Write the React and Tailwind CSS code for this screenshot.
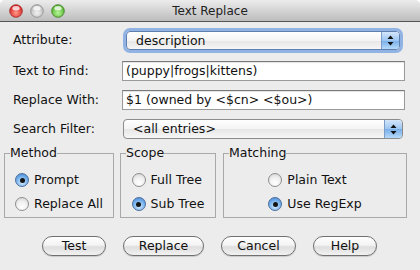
import React from "react";

function TrafficLight({ c1, c2, c3 }) {
  return (
    <svg width="14" height="14" viewBox="0 0 14 14">
      <defs>
        <radialGradient id={"g" + c1.slice(1)} cx="50%" cy="65%" r="60%">
          <stop offset="0%" stopColor={c3} />
          <stop offset="100%" stopColor={c2} />
        </radialGradient>
      </defs>
      <circle cx="7" cy="7" r="6.3" fill={"url(#g" + c1.slice(1) + ")"} stroke={c1} strokeWidth="0.8" />
      <ellipse cx="7" cy="4.2" rx="3.6" ry="2.2" fill="white" opacity="0.75" />
    </svg>
  );
}

function Arrows() {
  return (
    <svg width="7" height="11" viewBox="0 0 7 11">
      <path d="M3.5 0.5 L6.5 4 L0.5 4 Z" fill="#111" />
      <path d="M3.5 10.5 L6.5 7 L0.5 7 Z" fill="#111" />
    </svg>
  );
}

function Popup({ value, focused }) {
  return (
    <div
      className={
        focused
          ? "flex h-[19px] items-stretch rounded-[4px] border border-[#5f7fae] bg-[linear-gradient(#ffffff,#f4f4f4_50%,#e6e6e6_51%,#f6f6f6)] shadow-[0_0_0_3px_rgba(115,160,225,0.75)]"
          : "flex h-[20px] items-stretch rounded-[4px] border border-[#8c8c8c] bg-[linear-gradient(#ffffff,#f4f4f4_50%,#e6e6e6_51%,#f6f6f6)]"
      }
    >
      <div className="flex-1 pl-[9px] leading-[18px]">{value}</div>
      <div className="flex w-[18px] items-center justify-center rounded-r-[3px] border-l border-[#7d9cc8] bg-[linear-gradient(#d4e6fa,#9cc6f2_50%,#78aee8_51%,#b6dafa)]">
        <Arrows />
      </div>
    </div>
  );
}

function Field({ value }) {
  return (
    <div className="h-[20px] border border-[#9a9a9a] border-t-[#7a7a7a] bg-white pl-[3px] leading-[18px] shadow-[inset_0_1px_1px_rgba(0,0,0,0.12)]">
      {value}
    </div>
  );
}

function Radio({ label, checked }) {
  return (
    <div className="flex h-[24px] items-center gap-[5px]">
      <span
        className={
          checked
            ? "flex h-[14px] w-[14px] items-center justify-center rounded-full border border-[#4a6f9e] bg-[radial-gradient(circle_at_50%_70%,#d4ecff,#76b0ec_55%,#3f7fcc)]"
            : "h-[14px] w-[14px] rounded-full border border-[#8e8e8e] bg-[radial-gradient(circle_at_50%_75%,#ffffff,#f0f0f0_50%,#cfcfcf)]"
        }
      >
        {checked && <span className="h-[5px] w-[5px] rounded-full bg-[#141414]" />}
      </span>
      <span>{label}</span>
    </div>
  );
}

function Group({ title, width, children }) {
  return (
    <fieldset className={"border border-[#a9a9a9] " + width}>
      <legend className="ml-[5px] leading-[14px]">{title}</legend>
      <div className="flex justify-center pt-[8px] pb-[1px]">
        <div className="flex flex-col">{children}</div>
      </div>
    </fieldset>
  );
}

function Button({ label, width }) {
  return (
    <button
      className={
        "h-[20px] rounded-full border border-[#707070] bg-[linear-gradient(#ffffff,#f3f3f3_45%,#dedede_55%,#f2f2f2)] leading-[18px] shadow-[0_1px_1px_rgba(0,0,0,0.15)] " +
        width
      }
    >
      {label}
    </button>
  );
}

export default function App() {
  return (
    <div className="h-[270px] w-[420px] overflow-hidden bg-white font-['DejaVu_Sans',sans-serif] text-[12.5px] text-[#111]">
      <div className="h-full rounded-t-[5px] bg-[#ececec]">
        {/* title bar */}
        <div className="relative flex h-[22px] items-center rounded-t-[5px] border-b border-[#555] bg-[linear-gradient(#ececec,#d4d4d4_50%,#bdbdbd)]">
          <div className="flex gap-[7px] pl-[9px]">
            <TrafficLight c1="#9b2a2a" c2="#d81f1f" c3="#ff9a8a" />
            <TrafficLight c1="#8c8c8c" c2="#b9b9b9" c3="#f2f2f2" />
            <TrafficLight c1="#3d7a22" c2="#4fb329" c3="#b8f59a" />
          </div>
          <div className="absolute inset-0 flex items-center justify-center text-[12px] text-[#222]">Text Replace</div>
        </div>

        {/* form rows */}
        <div className="flex flex-col pt-[9px]">
          <div className="flex items-center">
            <div className="w-[126px] pl-[13px]">Attribute:</div>
            <div className="flex-1 pr-[20px]">
              <Popup value="description" focused />
            </div>
          </div>
          <div className="mt-[11px] flex items-center">
            <div className="w-[122px] pl-[13px]">Text to Find:</div>
            <div className="flex-1 pr-[15px]">
              <Field value="(puppy|frogs|kittens)" />
            </div>
          </div>
          <div className="mt-[9px] flex items-center">
            <div className="w-[122px] pl-[13px]">Replace With:</div>
            <div className="flex-1 pr-[15px]">
              <Field value="$1 (owned by <$cn> <$ou>)" />
            </div>
          </div>
          <div className="mt-[9px] flex items-center">
            <div className="w-[123px] pl-[13px]">Search Filter:</div>
            <div className="flex-1 pr-[17px]">
              <Popup value="<all entries>" />
            </div>
          </div>
        </div>

        {/* option groups */}
        <div className="mt-[7px] flex pl-[4px]">
          <Group title="Method" width="w-[110px]">
            <Radio label="Prompt" checked />
            <Radio label="Replace All" />
          </Group>
          <div className="w-[6px]" />
          <Group title="Scope" width="w-[96px]">
            <Radio label="Full Tree" />
            <Radio label="Sub Tree" checked />
          </Group>
          <div className="w-[7px]" />
          <Group title="Matching" width="w-[184px]">
            <Radio label="Plain Text" />
            <Radio label="Use RegExp" checked />
          </Group>
        </div>

        {/* buttons */}
        <div className="mt-[18px] flex justify-center gap-[17px] pr-[1px]">
          <Button label="Test" width="w-[64px]" />
          <Button label="Replace" width="w-[81px]" />
          <Button label="Cancel" width="w-[75px]" />
          <Button label="Help" width="w-[64px]" />
        </div>
      </div>
    </div>
  );
}
